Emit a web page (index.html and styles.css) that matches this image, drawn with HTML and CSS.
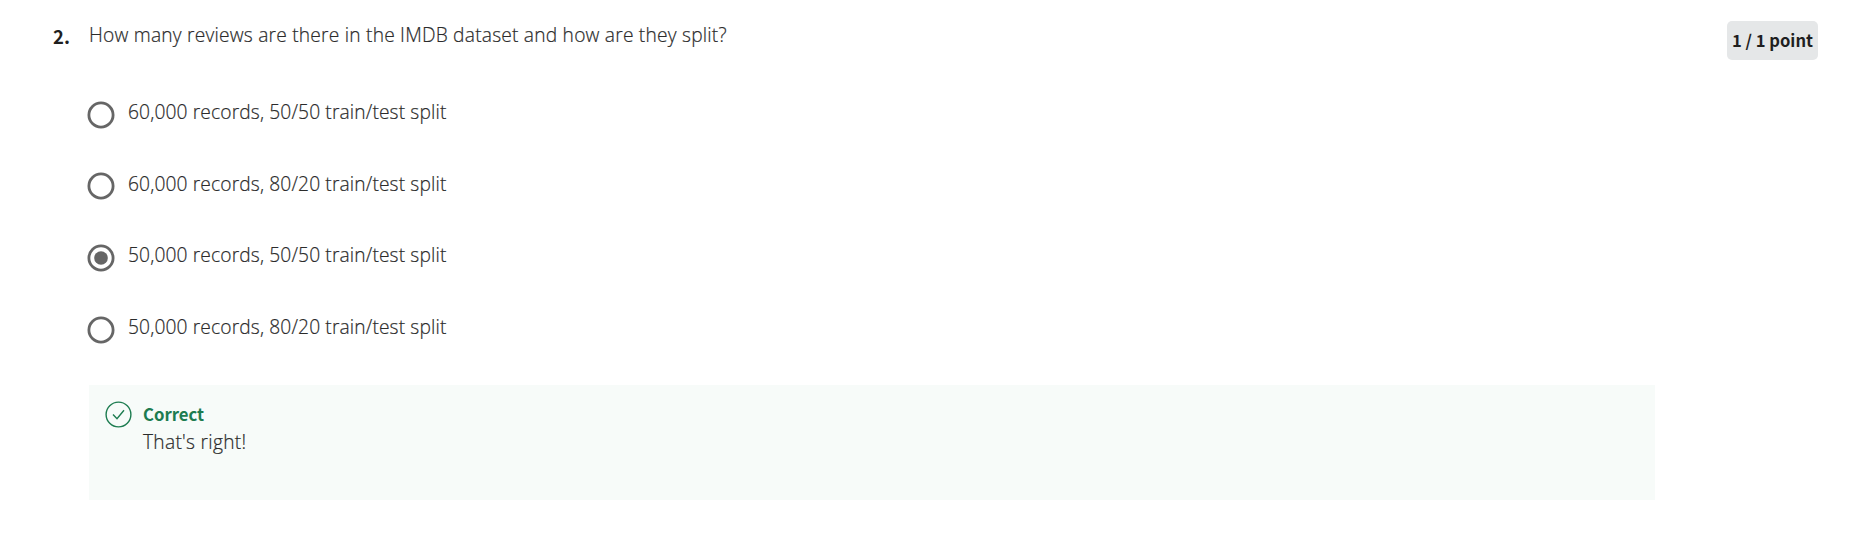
FILE: index.html
```html
<!DOCTYPE html>
<html lang="en">
<head>
<meta charset="utf-8">
<title>Quiz</title>
<link rel="stylesheet" href="styles.css">
</head>
<body>
<main class="question">
  <div class="number">2.</div>
  <section class="content">
    <p class="prompt">How many reviews are there in the IMDB dataset and how are they split?</p>
    <div class="options">
      <div class="option"><svg class="radio" viewBox="0 0 28 28"><circle class="ring" cx="14" cy="14" r="12.1"/></svg><span class="label">60,000 records, 50/50 train/test split</span></div>
      <div class="option"><svg class="radio" viewBox="0 0 28 28"><circle class="ring" cx="14" cy="14" r="12.1"/></svg><span class="label">60,000 records, 80/20 train/test split</span></div>
      <div class="option"><svg class="radio" viewBox="0 0 28 28"><circle class="ring" cx="14" cy="14" r="12.1"/><circle class="dot" cx="14" cy="14" r="6.8"/></svg><span class="label">50,000 records, 50/50 train/test split</span></div>
      <div class="option"><svg class="radio" viewBox="0 0 28 28"><circle class="ring" cx="14" cy="14" r="12.1"/></svg><span class="label">50,000 records, 80/20 train/test split</span></div>
    </div>
    <div class="feedback">
      <svg class="check" viewBox="0 0 28 28"><circle cx="13.5" cy="13.5" r="12.4"/><path d="M8 13.5l4 4.3 7-8.6"/></svg>
      <div><div class="verdict">Correct</div><div class="explanation">That's right!</div></div>
    </div>
  </section>
  <div class="score">1 / 1 point</div>
</main>
</body>
</html>
```
FILE: styles.css
```css
* { box-sizing: border-box; }
body { margin: 0; background: #fff; color: #2b2b2b; font-family: "Open Sans", "Noto Sans", sans-serif; font-size: 19.2px; font-weight: 300; }
.question { display: flex; align-items: flex-start; padding: 21px 37px 0 53px; }
.number { width: 36px; padding-top: 1px; font: 700 18.5px/28px "Noto Sans CJK JP", sans-serif; color: #1f1f1f; }
.content { width: 1566px; }
.prompt, .label, .explanation { -webkit-text-stroke: 0.2px #2b2b2b; }
.prompt { margin: 0; line-height: 28px; letter-spacing: 0.21px; }
.options { padding-top: 49px; }
.option { display: flex; height: 71.7px; gap: 13px; }
.radio { width: 28px; height: 28px; margin-top: 2.7px; margin-left: -2px; }
.ring { fill: none; stroke: #666; stroke-width: 2.8; }
.dot { fill: #666; }
.label { line-height: 28px; letter-spacing: 0.13px; }
.feedback { display: flex; gap: 10px; height: 115px; padding: 16px; background: #f7fbf9; }
.check { width: 28px; height: 28px; fill: none; stroke: #1d7c50; stroke-width: 1.4; }
.verdict { font: 700 16.7px/28px "Noto Sans CJK JP", sans-serif; color: #1d7c50; margin-top: -1px; }
.explanation { line-height: 28px; letter-spacing: 0.28px; }
.score { margin-left: auto; margin-top: 0; width: 91px; height: 39px; border-radius: 5px; background: #e5e7e8; text-align: center; font: 700 16.6px/38px "Noto Sans CJK JP", sans-serif; color: #1f1f1f; white-space: nowrap; }
```
